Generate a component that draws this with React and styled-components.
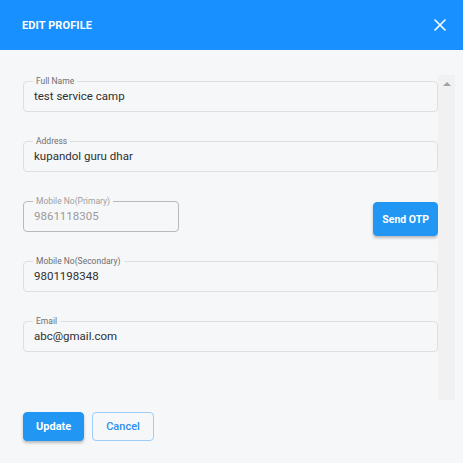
import React from 'react';
import styled, { createGlobalStyle } from 'styled-components';

const Global = createGlobalStyle`
  html, body { margin: 0; padding: 0; background: #f6f7f9; }
  body { font-family: Roboto, "Liberation Sans", Arial, sans-serif; }
  * { box-sizing: border-box; }
`;

const Dialog = styled.div`
  width: 463px;
  height: 463px;
  background: #f6f7f9;
  display: flex;
  flex-direction: column;
`;

const Header = styled.header`
  height: 50px;
  background: #1890ff;
  display: flex;
  align-items: center;
  justify-content: space-between;
  padding: 0 17px 0 22px;
`;

const Title = styled.h2`
  margin: 0;
  color: #fff;
  font-size: 11px;
  font-weight: 700;
  letter-spacing: 0.1px;
`;

const CloseBtn = styled.button`
  border: none;
  background: transparent;
  padding: 0;
  width: 12px;
  height: 12px;
  display: flex;
  cursor: pointer;
`;

const Body = styled.div`
  padding: 25px 8px 0 23px;
  display: flex;
  flex-direction: column;
`;

const ScrollArea = styled.div`
  height: 325px;
  display: flex;
`;

const Content = styled.div`
  flex: 1;
  padding-top: 1px;
  display: flex;
  flex-direction: column;
  gap: 24px;
`;

const Track = styled.div`
  width: 17px;
  background: #f1f1f1;
  display: flex;
  justify-content: center;
  padding-top: 7px;
`;

const Arrow = styled.div`
  width: 0;
  height: 0;
  border-left: 4px solid transparent;
  border-right: 4px solid transparent;
  border-bottom: 4px solid #a3a3a3;
`;

const Row = styled.div`
  height: 36px;
  display: flex;
  justify-content: space-between;
  align-items: flex-start;
`;

const Field = styled.fieldset`
  margin: 0;
  padding: 0 10px 4px 10px;
  border: 1px solid ${p => (p.$disabled ? '#b9b9b9' : '#dedfe1')};
  border-radius: 4px;
  width: ${p => p.$width || '100%'};
  min-width: 0;
`;

const Legend = styled.legend`
  font-size: 8.5px;
  line-height: 10px;
  padding: 0 3px;
  margin-left: -1px;
  color: ${p => (p.$disabled ? '#9e9e9e' : '#6e6e6e')};
`;

const Value = styled.div`
  height: 21px;
  line-height: 21px;
  font-size: 11.5px;
  white-space: nowrap;
  color: ${p => (p.$disabled ? '#9a9a9a' : '#2f2f2f')};
`;

const Button = styled.button`
  font-family: Roboto, "Liberation Sans", Arial, sans-serif;
  font-size: ${p => p.$fs || 11}px;
  font-weight: ${p => (p.$outline ? 500 : 700)};
  height: ${p => p.$h || 29}px;
  margin-top: ${p => p.$mt || 0}px;
  padding: 0 ${p => p.$px || 12}px;
  border-radius: 4px;
  cursor: pointer;
  background: ${p => (p.$outline ? 'transparent' : '#2196f3')};
  color: ${p => (p.$outline ? '#2f8ff0' : '#fff')};
  border: 1px solid ${p => (p.$outline ? '#9fcdf7' : '#2196f3')};
  box-shadow: ${p => (p.$outline ? 'none' : '0 2px 3px rgba(0,0,0,0.25)')};
`;

const Actions = styled.div`
  display: flex;
  gap: 8px;
  margin-top: 12px;
`;

const fields = [
  { label: 'Full Name', value: 'test service camp' },
  { label: 'Address', value: 'kupandol guru dhar' },
  { label: 'Mobile No(Primary)', value: '9861118305', primary: true },
  { label: 'Mobile No(Secondary)', value: '9801198348' },
  { label: 'Email', value: 'abc@gmail.com' },
];

export default function App() {
  return (
    <Dialog>
      <Global />
      <Header>
        <Title>EDIT PROFILE</Title>
        <CloseBtn aria-label="close">
          <svg width="12" height="12" viewBox="0 0 12 12">
            <path d="M1 1L11 11M11 1L1 11" stroke="#fff" strokeWidth="1.6" strokeLinecap="round" />
          </svg>
        </CloseBtn>
      </Header>
      <Body>
        <ScrollArea>
          <Content>
            {fields.map(f =>
              f.primary ? (
                <Row key={f.label}>
                  <Field $disabled $width="156px">
                    <Legend $disabled>{f.label}</Legend>
                    <Value $disabled>{f.value}</Value>
                  </Field>
                  <Button $mt={6} $h={34} $px={8} $fs={10.5}>Send OTP</Button>
                </Row>
              ) : (
                <Field key={f.label}>
                  <Legend>{f.label}</Legend>
                  <Value>{f.value}</Value>
                </Field>
              )
            )}
          </Content>
          <Track><Arrow /></Track>
        </ScrollArea>
        <Actions>
          <Button $px={12}>Update</Button>
          <Button $outline $px={13}>Cancel</Button>
        </Actions>
      </Body>
    </Dialog>
  );
}
